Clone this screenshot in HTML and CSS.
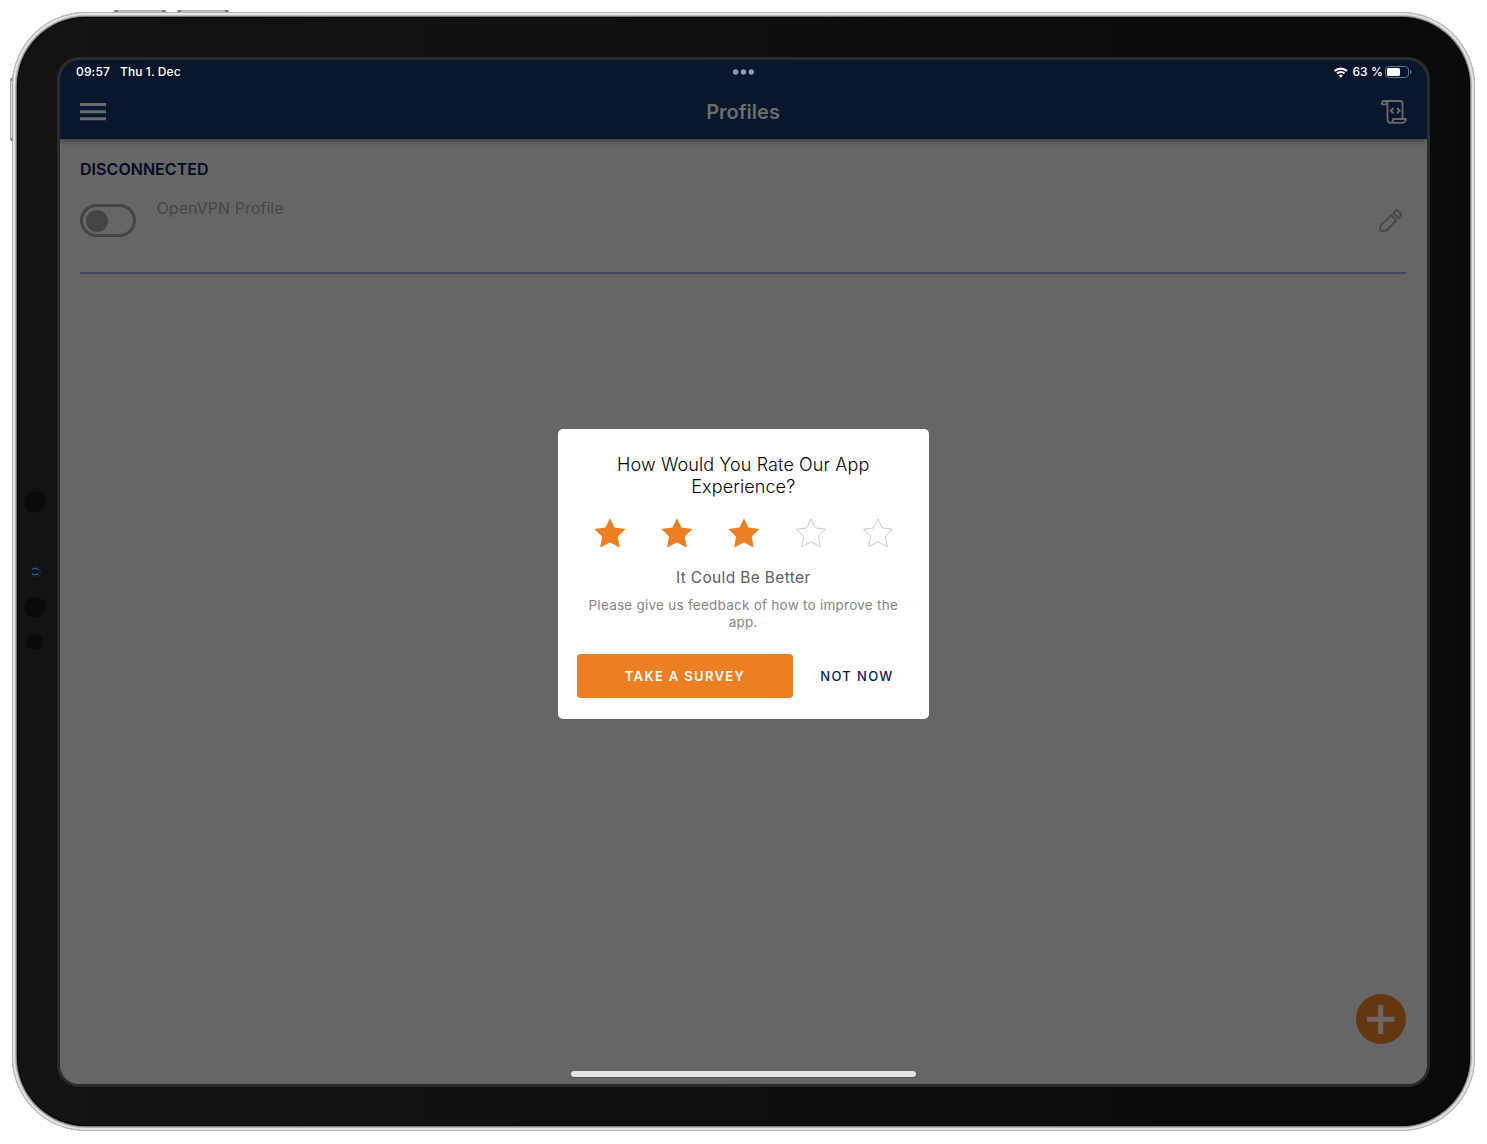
FILE: index.html
```html
<!DOCTYPE html>
<html lang="en">
<head>
<meta charset="utf-8">
<title>Profiles</title>
<link rel="stylesheet" href="styles.css">
</head>
<body>
<div class="device">
  <span class="hw-button volume-up"></span>
  <span class="hw-button volume-down"></span>
  <span class="hw-button power"></span>
  <div class="bezel">
    <svg class="sensors" width="24" height="166" viewBox="0 0 24 166">
      <circle cx="11.8" cy="12" r="10.5" fill="#0a0a0a"/>
      <circle cx="11.8" cy="46.500" r="2" fill="#191919"/>
      <circle cx="13" cy="82" r="5.500" fill="#1d2022"/>
      <circle cx="11.800" cy="81.500" r="4.200" fill="#0a1420"/>
      <path d="M9 79.500a4 3 0 0 1 6 0M9 83.500a4 3 0 0 0 6 0" fill="none" stroke="#245f9c" stroke-width="1.300"/>
      <circle cx="11.800" cy="117" r="10.500" fill="#0a0a0a"/>
      <circle cx="11.800" cy="152" r="8" fill="#0a0a0a"/>
    </svg>
    <div class="screen">
      <header class="header">
        <div class="status">
          <div class="status-left"><span class="time">09:57</span><span class="date">Thu 1. Dec</span></div>
          <svg class="dots" width="22" height="6" viewBox="0 0 22 6"><g fill="#8f9cb9"><circle cx="2.700" cy="3" r="2.700"/><circle cx="10.500" cy="3" r="2.700"/><circle cx="18.300" cy="3" r="2.700"/></g></svg>
          <div class="status-right">
            <svg class="wifi" width="15" height="11" viewBox="0 0 15 11"><path d="M1.600 4.100a9 9 0 0 1 12.300 0M4 6.500a5.600 5.600 0 0 1 7.500 0" fill="none" stroke="#fff" stroke-width="2.100"/><path d="M5.700 8.400a3.200 3.200 0 0 1 4.200 0L7.800 10.700z" fill="#fff"/></svg>
            <span class="percent">63 %</span>
            <svg class="battery" width="27" height="12" viewBox="0 0 27 12"><rect x=".5" y=".5" width="23" height="11" rx="3.300" fill="none" stroke="#68738a"/><rect x="2" y="2" width="13" height="8" rx="1.600" fill="#fff"/><path d="M25 4v4q1.500-.6 1.500-2T25 4z" fill="#68738a"/></svg>
          </div>
        </div>
        <div class="toolbar">
          <svg class="menu-icon" width="26" height="18" viewBox="0 0 26 18"><path d="M0 1.500h26M0 8.700h26M0 15.800h26" stroke="#696b6e" stroke-width="2.900"/></svg>
          <h1 class="title">Profiles</h1>
          <svg class="log-icon" width="26" height="24" viewBox="0 0 26 24"><g fill="none" stroke="#686a6d" stroke-width="1.800" stroke-linejoin="round"><path d="M6.500 4.300H1V3q0-2 2.200-2h16q2.300 0 2.300 2.300V18.200"/><path d="M3.500 1q3 0 3 3v15.500q0 3.300 3.300 3.300H21q3.700 0 4-3.800H12v1.200q0 2.300-2 2.600"/></g><path d="M12.600 8 9.800 10.700l2.800 2.700M15.900 8l2.800 2.700-2.800 2.700" fill="none" stroke="#686a6d" stroke-width="1.900"/></svg>
        </div>
      </header>
      <main class="content">
        <h2 class="state">DISCONNECTED</h2>
        <div class="profile">
          <span class="toggle"><span class="knob"></span></span>
          <span class="profile-name">OpenVPN Profile</span>
          <svg class="edit" width="24" height="24" viewBox="0 0 24 24"><g fill="none" stroke="#454545" stroke-width="1.700" stroke-linejoin="round"><path d="M12.300 6.100 17.400 11.200 7.700 21.300Q7 22 6 22H2.500Q1.300 22 1.300 20.800V18Q1.300 17 2 16.300z"/><path d="M14.300 4.100 16.800 1.700q1-1 2 0l3 3q1 1 0 2L19.400 9.200z"/></g></svg>
        </div>
      </main>
      <button class="fab" aria-label="Add"><svg width="50" height="50" viewBox="0 0 50 50"><path d="M24.700 11v29M11 25.300h27.500" stroke="#6b6764" stroke-width="5"/></svg></button>
      <span class="home-indicator"></span>
      <section class="dialog">
        <h3 class="question">How Would You Rate Our App<br>Experience?</h3>
        <div class="stars">
          <svg class="star on" width="32" height="30" viewBox="0 0 32 30"><path d="M16 .3 20.500 9.600 31.500 11 23.700 18.400 25.700 29.500 16 24.600 6.200 29.500 8 18.500 .5 11 11.500 9.600z"/></svg>
          <svg class="star on" width="32" height="30" viewBox="0 0 32 30"><path d="M16 .3 20.500 9.600 31.500 11 23.700 18.400 25.700 29.500 16 24.600 6.200 29.500 8 18.500 .5 11 11.500 9.600z"/></svg>
          <svg class="star on" width="32" height="30" viewBox="0 0 32 30"><path d="M16 .3 20.500 9.600 31.500 11 23.700 18.400 25.700 29.500 16 24.600 6.200 29.500 8 18.500 .5 11 11.500 9.600z"/></svg>
          <svg class="star" width="32" height="30" viewBox="0 0 32 30"><path d="M16 1 20.200 9.900 30.500 11.300 23.200 18.200 25.300 28.700 16 24 6.700 28.700 8.500 18.200 1.500 11.300 11.700 9.900z"/></svg>
          <svg class="star" width="30" height="30" viewBox="1 0 30 30"><path d="M16 1 20.200 9.900 30.500 11.300 23.200 18.200 25.300 28.700 16 24 6.700 28.700 8.500 18.200 1.500 11.300 11.700 9.900z"/></svg>
        </div>
        <p class="verdict">It Could Be Better</p>
        <p class="hint">Please give us feedback of how to improve the<br>app.</p>
        <div class="actions">
          <button class="survey">TAKE A SURVEY</button>
          <button class="later">NOT NOW</button>
        </div>
      </section>
    </div>
  </div>
</div>
</body>
</html>
```
FILE: styles.css
```css
* { box-sizing: border-box; }
body { margin: 0; padding: 12px; background: #fff; font-family: Inter, "Liberation Sans", sans-serif; overflow: hidden; }
h1, h2, h3, p { margin: 0; }
button { border: 0; padding: 0; font-family: inherit; }
svg { display: block; flex: none; }

.device {
  position: relative;
  width: 1463px;
  height: 1119px;
  padding: 5px;
  border-radius: 74px;
  background: #c4c6c6;
  box-shadow: inset 0 0 0 1px #b4b6b6, inset 0 0 0 3px #e3e5e4, inset 0 0 0 4px #b5b7b7, inset 0 0 0 5px #777979;
}
.hw-button { position: absolute; background: #d8dad9; border: 0 solid #777; }
.volume-up, .volume-down { top: -2px; width: 52px; height: 2px; background: #b9bbba; border-width: 0 4px; border-radius: 2px 2px 0 0; }
.volume-up { left: 102px; }
.volume-down { left: 165px; }
.power { left: -2px; top: 66px; width: 3px; height: 63px; border: 1px solid #a5a7a6; border-top: 3px solid #777; border-bottom: 3px solid #777; border-radius: 2px 0 0 2px; background: #e4e6e5; }

.bezel {
  position: relative;
  height: 100%;
  padding: 40px;
  border-radius: 69px;
  background: linear-gradient(90deg, #131313, #0a0a0a);
  box-shadow: inset 0 0 0 1px #050505;
}
.sensors { position: absolute; left: 6px; top: 473px; }

.screen {
  position: relative;
  height: 1030px;
  border: 3px solid #2b2b2b;
  border-radius: 22px;
  background: #666;
  overflow: hidden;
}
.header { position: relative; height: 79px; background: #0a162c; box-shadow: 0 1px 7px rgba(0, 0, 0, .5); }
.status { display: grid; grid-template-columns: 1fr 22px 1fr; align-items: center; height: 24px; padding: 0 16px; color: #fff; font-size: 12px; font-weight: 600; }
.status-left { display: flex; gap: 10px; margin-top: -1px; }
.time { font-weight: 550; letter-spacing: .15px; }
.date { font-weight: 550; letter-spacing: .1px; }
.status-right { display: flex; align-items: center; justify-content: flex-end; }
.status-right .battery { margin-right: -1px; }
.percent { margin: -1px 2px 0 4px; font-weight: 500; font-size: 12px; letter-spacing: .1px; }
.toolbar { display: flex; align-items: center; justify-content: space-between; height: 55px; padding: 1px 20px 0; }
.title { margin-right: 1px; font-size: 20px; line-height: 24px; font-weight: 600; color: #6b6d70; }

.content { padding: 20px 21px 0 20px; }
.state { font-size: 16px; line-height: 20px; font-weight: 600; letter-spacing: .05px; color: #030b25; }
.profile { display: flex; height: 95px; padding-top: 25px; border-bottom: 2px solid #444861; }
.toggle { width: 56px; height: 33px; padding: 3px; border: 3px solid #444; border-radius: 17px; }
.knob { display: block; width: 22px; height: 22px; margin-top: -.5px; border-radius: 50%; background: #444; }
.profile-name { flex: 1; margin: -6px 0 0 20.500px; font-size: 16px; line-height: 20px; letter-spacing: .05px; color: #464646; }
.edit { margin: 5px 3px 0 0; }

.fab { position: absolute; right: 21px; bottom: 40px; width: 50px; height: 50px; border-radius: 50%; background: #633710; }
.home-indicator { position: absolute; left: 511px; bottom: 7px; width: 345px; height: 6px; border-radius: 3px; background: #e4e4e4; box-shadow: 0 1px 1px #505050; }

.dialog {
  position: absolute;
  left: 498px;
  top: 369px;
  width: 370.500px;
  height: 290px;
  padding: 25px 19px 0;
  border-radius: 5px;
  background: #fff;
  text-align: center;
}
.question { font-size: 18px; line-height: 22px; font-weight: 300; letter-spacing: .1px; color: #050505; }
.stars { display: flex; justify-content: space-between; margin: 19.500px 17px 0 17px; }
.star { fill: none; stroke: #c9c9c9; stroke-width: 1; }
.star.on { fill: #ec7f22; stroke: none; }
.verdict { margin-top: 20px; font-size: 15.500px; line-height: 20px; letter-spacing: .35px; color: #606060; }
.hint { margin-top: 9.500px; font-size: 13.500px; line-height: 17px; letter-spacing: .25px; color: #858585; white-space: nowrap; }
.actions { display: flex; margin-top: 23px; }
.survey, .later { flex: none; height: 44px; font-size: 13px; font-weight: 600; letter-spacing: 1.350px; }
.survey { width: 216px; border-radius: 4px; background: #ec7f22; color: #fff; }
.later { width: 128px; background: none; color: #081c51; font-weight: 550; }
```
